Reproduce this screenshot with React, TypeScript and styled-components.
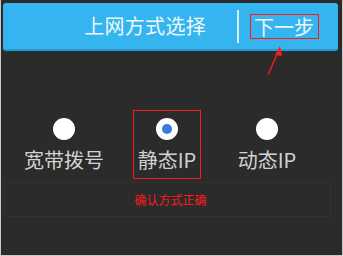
import styled, { createGlobalStyle } from "styled-components";
import { FC } from "react";

const GlobalStyle = createGlobalStyle`
	html, body {
		margin: 0;
		padding: 0;
		background: #ffffff;
	}
	body {
		font-family: "Noto Sans CJK SC", "Noto Sans", sans-serif;
	}
`;

type Option = { label: string; checked?: boolean; marked?: boolean };

const options: Option[] = [
	{ label: "宽带拨号" },
	{ label: "静态IP", checked: true, marked: true },
	{ label: "动态IP" },
];

const App: FC = () => {
	return (
		<>
			<GlobalStyle />
			<Frame>
				<Header>
					<Title>上网方式选择</Title>
					<Divider />
					<NextButton>下一步</NextButton>
				</Header>

				<OptionRow>
					{options.map((opt) => (
						<OptionCell key={opt.label}>
							<OptionBox $marked={opt.marked}>
								<Radio>{opt.checked && <RadioDot />}</Radio>
								<OptionLabel>{opt.label}</OptionLabel>
							</OptionBox>
						</OptionCell>
					))}
				</OptionRow>

				<HintBar>
					<Hint>确认方式正确</Hint>
				</HintBar>

				{/* annotation arrow pointing at the next button */}
				<Arrow width='24' height='36' viewBox='0 0 24 36'>
					<line x1='5' y1='33' x2='15' y2='10' stroke='#ff1a1a' strokeWidth='1.3' />
					<polygon points='17,4 12,13 19,14' fill='#ff1a1a' />
				</Arrow>
			</Frame>
		</>
	);
};

export default App;

const Frame = styled.div`
	position: relative;
	width: 343px;
	height: 256px;
	box-sizing: border-box;
	background: #2b2b2b;
	border-left: 1px solid #c8c8c8;
	border-right: 1px solid #c8c8c8;
	border-bottom: 1px solid #c8c8c8;
	padding: 3px 4px 0 2px;
	display: flex;
	flex-direction: column;
`;

const Header = styled.div`
	height: 48px;
	box-sizing: border-box;
	background: #34b5ef;
	border-bottom: 2px solid #1f9bd6;
	border-radius: 3px;
	display: flex;
	align-items: center;
	justify-content: flex-end;
	padding-right: 19px;
`;

const Title = styled.div`
	font-size: 20px;
	line-height: 24px;
	color: #eef8fd;
	letter-spacing: 0.3px;
`;

const Divider = styled.div`
	width: 2px;
	height: 33px;
	background: #d3effc;
	margin: 0 11px 0 31px;
`;

const NextButton = styled.div`
	font-size: 20px;
	line-height: 23px;
	color: #eef8fd;
	padding: 0 4px 0 3px;
	border: 1px solid #ff1a1a;
`;

const OptionRow = styled.div`
	display: grid;
	grid-template-columns: 100px 106px 94px;
	padding-left: 11px;
	margin-top: 59px;
`;

const OptionCell = styled.div`
	display: flex;
	justify-content: center;
`;

const OptionBox = styled.div<{ $marked?: boolean }>`
	width: 68px;
	height: 69px;
	box-sizing: border-box;
	border: 1px solid ${(p) => (p.$marked ? "#ff1a1a" : "transparent")};
	display: flex;
	flex-direction: column;
	align-items: center;
	padding-top: 7px;
`;

const Radio = styled.div`
	width: 22px;
	height: 22px;
	border-radius: 50%;
	background: #ffffff;
	display: flex;
	align-items: center;
	justify-content: center;
`;

const RadioDot = styled.div`
	width: 10px;
	height: 10px;
	border-radius: 50%;
	background: #3a7bd5;
`;

const OptionLabel = styled.div`
	margin-top: 8px;
	font-size: 20px;
	line-height: 24px;
	color: #d2d2d2;
	white-space: nowrap;
`;

const HintBar = styled.div`
	margin: 3px 7px 0 1px;
	height: 33px;
	border: 1px solid #313131;
	display: flex;
	justify-content: center;
	align-items: center;
	padding-left: 6px;
`;

const Hint = styled.div`
	font-size: 12px;
	line-height: 14px;
	color: #ff1a1a;
`;

const Arrow = styled.svg`
	position: absolute;
	left: 262px;
	top: 42px;
`;
